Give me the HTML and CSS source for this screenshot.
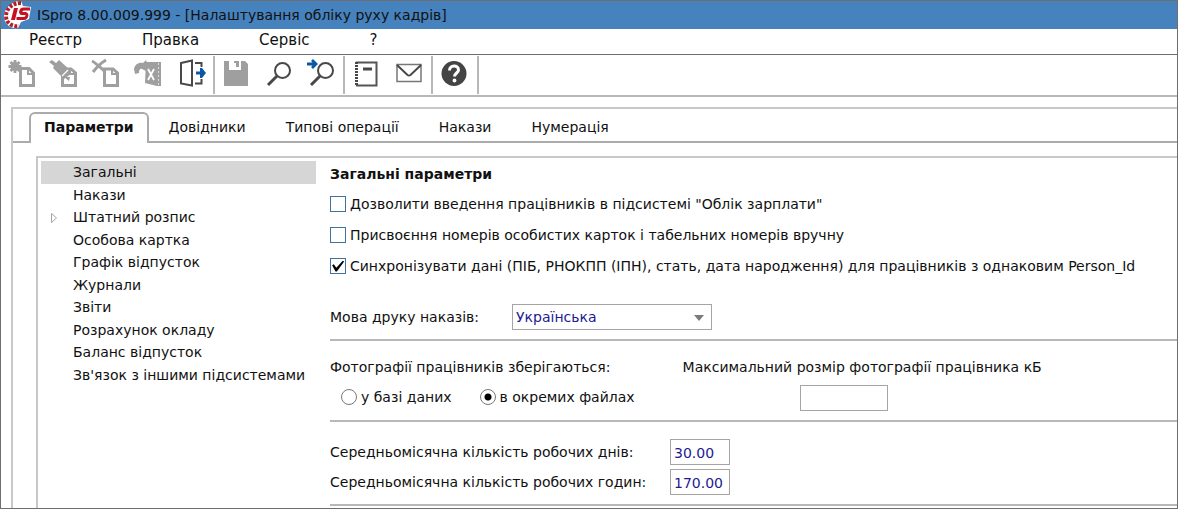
FILE: index.html
```html
<!DOCTYPE html>
<html lang="uk">
<head>
<meta charset="utf-8">
<title>ISpro 8.00.009.999 - [Налаштування обліку руху кадрів]</title>
<link rel="stylesheet" href="styles.css">
</head>
<body>
<div class="window">
  <header class="titlebar">
    <svg class="logo" viewBox="0 0 28 28" aria-hidden="true">
      <path d="M18 0C8 0 1 8 1 15C1 23 7 28 15 27L18 21L26 18L28 6L20 5Z" fill="#fff"/>
      <path d="M18 2C9 2 3 8 3 15C3 22 9 26 16 25" fill="none" stroke="#b0202c" stroke-width="4" stroke-dasharray="3 1.500"/>
      <path d="M8 19L11 7H15L12 19Z" fill="#c41220"/>
      <path d="M27 8H20.500C17.500 8 16.500 12.500 19 12.500H22.500C25 12.500 24 17.500 21 17.500H13.500" fill="none" stroke="#c41220" stroke-width="3"/>
    </svg>
    <h1 class="title">ISpro 8.00.009.999 - [Налаштування обліку руху кадрів]</h1>
  </header>

  <nav class="menu">
    <button class="menu-item">Реєстр</button>
    <button class="menu-item">Правка</button>
    <button class="menu-item">Сервіс</button>
    <button class="menu-item">?</button>
  </nav>

  <div class="toolbar" role="toolbar">
    <div class="tool-group">
      <button class="tool" aria-label="Створити" disabled><svg viewBox="0 0 30 30">
        <circle cx="8" cy="7.500" r="4.500" fill="#9f9f9f"/>
        <path d="M8 1V14M1.500 7.500H14.500M3.500 3L12.500 12M12.500 3L3.500 12" stroke="#9f9f9f" stroke-width="2.800"/>
        <path d="M13.500 9.500H22L26.500 14V26.500H13.500Z" fill="#fff" stroke="#9f9f9f" stroke-width="3"/>
        <path d="M21 9V15H27" fill="none" stroke="#9f9f9f" stroke-width="2"/></svg></button>
      <button class="tool" aria-label="Змінити" disabled><svg viewBox="0 0 30 30">
        <path d="M13.500 10H22L26.500 14V26.500H13.500Z" fill="#fff" stroke="#9f9f9f" stroke-width="3"/>
        <path d="M21 9V15H27" fill="none" stroke="#9f9f9f" stroke-width="2"/>
        <path d="M0 3L3 1L7 4L10 1L21 11L22 15L15 20L4 9L5 7Z" fill="#9f9f9f"/>
        <path d="M13 17L19 11" stroke="#fff" stroke-width="1.200"/>
        <path d="M15 18L21 18L20 22Z" fill="#9f9f9f"/></svg></button>
      <button class="tool" aria-label="Видалити" disabled><svg viewBox="0 0 30 30">
        <path d="M1 2C5 4 10 9 15 13.500M15 1C10 4 5 9 2 13" fill="none" stroke="#9f9f9f" stroke-width="3"/>
        <path d="M13.500 10H22L26.500 14V26.500H13.500Z" fill="#fff" stroke="#9f9f9f" stroke-width="3"/>
        <path d="M21 9V15H27" fill="none" stroke="#9f9f9f" stroke-width="2"/></svg></button>
      <button class="tool" aria-label="Експорт" disabled><svg viewBox="0 0 30 30">
        <path d="M13 3H28V27H24L12 24Z" fill="#9f9f9f"/>
        <path d="M2 15L1 10C2 5 6 3 10 4L13 1L15 7L13 12L9 10C7 9 6 11 6 14Z" fill="#9f9f9f"/>
        <path d="M15 10L21 21M21 10L15 21" stroke="#fff" stroke-width="1.800"/>
        <path d="M25.500 4V26" stroke="#ddd" stroke-dasharray="2 2"/></svg></button>
      <button class="tool" aria-label="Вихід"><svg viewBox="0 0 30 30">
        <path d="M6 4L17 1.500V26.500L6 24.500Z" fill="#fff" stroke="#484848" stroke-width="2"/>
        <path d="M20 4H26.500V8M26.500 20V24.500H20" fill="none" stroke="#484848" stroke-width="2"/>
        <path d="M25 9H27L31 14L27 19H25Z" fill="#0b57a4"/>
        <path d="M21 14H28" stroke="#0b57a4" stroke-width="3"/></svg></button>
    </div>
    <div class="tool-group">
      <button class="tool" aria-label="Зберегти" disabled><svg viewBox="0 0 30 30">
        <path d="M3 2H8V11H20V2H24L27 5V27H3Z" fill="#9f9f9f"/>
        <path d="M13 2H18V8H15V4H13Z" fill="#9f9f9f"/></svg></button>
      <button class="tool" aria-label="Пошук"><svg viewBox="0 0 30 30">
        <circle cx="19.500" cy="11.500" r="7.500" fill="#fff" stroke="#484848" stroke-width="2"/>
        <path d="M14 17L5 26" stroke="#484848" stroke-width="3"/></svg></button>
      <button class="tool" aria-label="Шукати далі"><svg viewBox="0 0 30 30">
        <circle cx="20.500" cy="11.500" r="7.500" fill="#fff" stroke="#484848" stroke-width="2"/>
        <path d="M15 17L6 26" stroke="#484848" stroke-width="3"/>
        <path d="M2 5H11M7 1L11 5L7 9" fill="none" stroke="#0b57a4" stroke-width="2.800"/></svg></button>
    </div>
    <div class="tool-group">
      <button class="tool" aria-label="Довідник"><svg viewBox="0 0 30 30">
        <path d="M5 3.500H25.500V26.500H5" fill="none" stroke="#555" stroke-width="2"/>
        <path d="M5.500 3V27" stroke="#484848" stroke-width="3" stroke-dasharray="2 1"/>
        <path d="M12 10H21" stroke="#484848" stroke-width="3"/></svg></button>
      <button class="tool" aria-label="Пошта"><svg viewBox="0 0 30 30">
        <path d="M4 5.500H28V22.500H4Z" fill="#fff" stroke="#777" stroke-width="1.500"/>
        <path d="M4 6L14.500 16Q16 17 17.500 16L28 6" fill="none" stroke="#484848" stroke-width="2"/></svg></button>
    </div>
    <div class="tool-group">
      <button class="tool" aria-label="Довідка"><svg viewBox="0 0 30 30">
        <circle cx="15" cy="14.500" r="12.500" fill="#444"/>
        <path d="M10.500 11.500C10.500 5.500 19.500 5.500 19.500 11C19.500 14 15.500 14 15.500 17.500" fill="none" stroke="#fff" stroke-width="3"/>
        <circle cx="15.500" cy="21.500" r="1.900" fill="#fff"/></svg></button>
    </div>
  </div>

  <main class="frame">
    <div class="tabs" role="tablist">
      <button class="tab tab-active" role="tab" aria-selected="true">Параметри</button>
      <button class="tab" role="tab">Довідники</button>
      <button class="tab" role="tab">Типові операції</button>
      <button class="tab" role="tab">Накази</button>
      <button class="tab" role="tab">Нумерація</button>
      <span class="tab-rest"></span>
    </div>

    <div class="panel">
      <ul class="tree">
        <li class="node node-selected">Загальні</li>
        <li class="node">Накази</li>
        <li class="node"><svg class="expander" viewBox="0 0 8 12" aria-hidden="true"><path d="M1.500 1.500V10.500L6.500 6Z" fill="#fff" stroke="#a5a5a5"/></svg>Штатний розпис</li>
        <li class="node">Особова картка</li>
        <li class="node">Графік відпусток</li>
        <li class="node">Журнали</li>
        <li class="node">Звіти</li>
        <li class="node">Розрахунок окладу</li>
        <li class="node">Баланс відпусток</li>
        <li class="node">Зв'язок з іншими підсистемами</li>
      </ul>

      <form class="settings">
        <h2 class="heading">Загальні параметри</h2>
        <div class="checks">
          <label class="option"><input class="check" type="checkbox">Дозволити введення працівників в підсистемі "Облік зарплати"</label>
          <label class="option"><input class="check" type="checkbox">Присвоєння номерів особистих карток і табельних номерів вручну</label>
          <label class="option"><input class="check" type="checkbox" checked>Синхронізувати дані (ПІБ, РНОКПП (ІПН), стать, дата народження) для працівників з однаковим Person_Id</label>
        </div>

        <div class="language">
          <label for="lang">Мова друку наказів:</label>
          <span class="select-box">
            <select class="field select" id="lang"><option>Українська</option></select>
            <svg class="arrow" viewBox="0 0 10 6" aria-hidden="true"><path d="M0 0H10L5 6Z" fill="#7b7b7b"/></svg>
          </span>
        </div>

        <div class="photos">
          <fieldset class="storage">
            <legend class="legend">Фотографії працівників зберігаються:</legend>
            <div class="radios">
              <label class="option"><input class="radio" type="radio" name="storage">у базі даних</label>
              <label class="option"><input class="radio" type="radio" name="storage" checked>в окремих файлах</label>
            </div>
          </fieldset>
          <div class="size">
            <label for="size">Максимальний розмір фотографії працівника кБ</label>
            <input class="field size-input" id="size" type="text">
          </div>
        </div>

        <div class="averages">
          <label for="days">Середньомісячна кількість робочих днів:</label>
          <input class="field" id="days" type="text" value="30.00">
          <label for="hours">Середньомісячна кількість робочих годин:</label>
          <input class="field" id="hours" type="text" value="170.00">
        </div>
      </form>
    </div>
  </main>
</div>
</body>
</html>
```

FILE: styles.css
```css
* {
  box-sizing: border-box;
}

body {
  margin: 0;
  background: #fff;
  color: #111;
  font-family: "DejaVu Sans", sans-serif;
  font-size: 14px;
  line-height: 16px;
}

button,
input,
select {
  font: inherit;
  color: inherit;
}

button {
  padding: 0;
  border: 0;
  background: none;
}

.window {
  display: flex;
  flex-direction: column;
  height: 100vh;
  border: 1px solid #6e6e6e;
  overflow: hidden;
}

.titlebar {
  display: flex;
  align-items: center;
  flex: none;
  gap: 6px;
  height: 28px;
  padding-left: 2px;
  background: #4682bd;
}

.logo {
  width: 28px;
  height: 28px;
}

.title {
  margin: 0;
  font-size: 14px;
  font-weight: normal;
}

.menu {
  display: flex;
  flex: none;
  gap: 60px;
  height: 26px;
  padding: 0 28px 4px;
  border-bottom: 1px solid #6e6e6e;
  font-size: 15px;
}

.toolbar {
  display: flex;
  flex: none;
  height: 42px;
  border-bottom: 2px solid #b8b8b8;
}

.tool-group {
  display: flex;
  gap: 12px;
  margin: 1px 0;
  padding: 0 8px 0 6px;
  border-right: 2px solid #b8b8b8;
}

.tool {
  width: 30px;
  height: 36px;
}

.tool svg {
  display: block;
  width: 30px;
  height: 30px;
  overflow: visible;
}

.frame {
  display: flex;
  flex: 1;
  flex-direction: column;
  min-height: 0;
  margin: 10px 0 0 10px;
  border-top: 2px solid #c8c8c8;
  border-left: 2px solid #c8c8c8;
}

.tabs {
  display: flex;
  flex: none;
  height: 34px;
  padding-top: 3px;
}

.tabs::before {
  width: 16px;
  border-bottom: 2px solid #ababab;
  content: "";
}

.tab {
  padding: 0 20px;
  border-bottom: 2px solid #ababab;
}

.tab-active {
  padding: 0 13px 3px;
  border: 2px solid #ababab;
  border-bottom: 0;
  border-radius: 6px 6px 0 0;
  font-weight: bold;
}

.tab-rest {
  flex: 1;
  border-bottom: 2px solid #ababab;
}

.panel {
  display: flex;
  flex: 1;
  gap: 14px;
  min-height: 0;
  margin: 13px 0 0 23px;
  padding: 3px 0 0 3px;
  border-top: 2px solid #c8c8c8;
  border-left: 2px solid #c8c8c8;
}

.tree {
  flex: none;
  width: 275px;
  margin: 0;
  padding: 0;
  list-style: none;
}

.node {
  position: relative;
  height: 22px;
  padding-left: 32px;
  line-height: 22px;
}

.node:nth-child(odd) {
  height: 23px;
}

.node-selected {
  background: #d6d6d6;
}

.expander {
  position: absolute;
  top: 6px;
  left: 9px;
  width: 8px;
  height: 12px;
}

.settings {
  flex: 1;
  min-width: 0;
  white-space: nowrap;
}

.heading {
  margin: 5px 0 14px;
  font-size: 14px;
}

.checks {
  display: grid;
  gap: 15px;
}

.option {
  display: flex;
  align-items: center;
  gap: 4px;
}

.check {
  flex: none;
  width: 16px;
  height: 16px;
  margin: 0;
  border: 1px solid #41719f;
  background: #fff;
  appearance: none;
}

.check:checked::before {
  display: block;
  width: 14px;
  height: 14px;
  background: #000;
  clip-path: polygon(8% 45%, 20% 38%, 38% 62%, 84% 12%, 94% 18%, 42% 90%, 32% 90%);
  content: "";
}

.language {
  display: flex;
  align-items: center;
  gap: 33px;
  height: 67px;
  padding-top: 20px;
  border-bottom: 2px solid #b8b8b8;
}

.field {
  width: 60px;
  height: 26px;
  padding: 2px 3px 0;
  border: 1px solid #a5a5a5;
  border-radius: 0;
  background: #fff;
  color: #1c1c8f;
}

.select-box {
  position: relative;
}

.select {
  width: 200px;
  padding: 0 3px;
  appearance: none;
}

.arrow {
  position: absolute;
  top: 11px;
  right: 8px;
  width: 10px;
  height: 6px;
  pointer-events: none;
}

.photos {
  display: flex;
  gap: 48px;
  height: 81px;
  padding-top: 18px;
  border-bottom: 2px solid #b8b8b8;
}

.storage {
  margin: 0;
  padding: 0;
  border: 0;
}

.legend {
  padding: 0;
}

.radios {
  display: flex;
  gap: 28px;
  padding: 14px 0 0 11px;
}

.radio {
  flex: none;
  width: 16px;
  height: 16px;
  margin: 0;
  border: 1px solid #777;
  border-radius: 50%;
  appearance: none;
}

.radio:checked {
  background: radial-gradient(circle, #000 3px, #fff 4px);
}

.size {
  display: flex;
  flex-direction: column;
  align-items: center;
  gap: 10px;
}

.size-input {
  width: 88px;
  margin-right: 36px;
}

.averages {
  display: grid;
  grid-template-columns: 340px 60px;
  align-items: center;
  gap: 4px 0;
  padding: 17px 0 9px;
  border-bottom: 2px solid #b8b8b8;
}
```
